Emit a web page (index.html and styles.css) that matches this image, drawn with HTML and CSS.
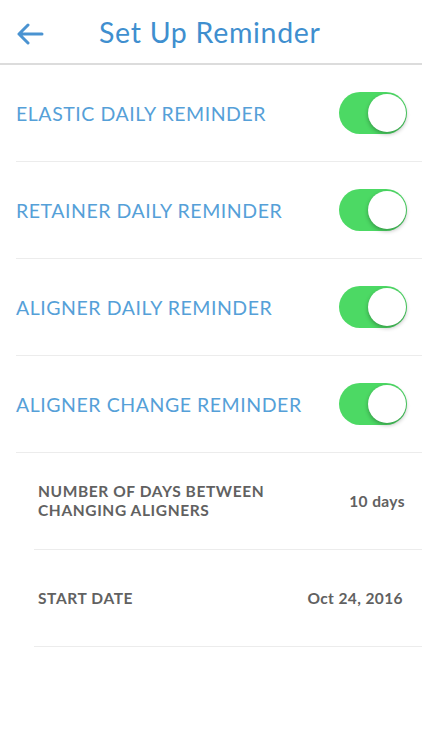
FILE: index.html
```html
<!DOCTYPE html>
<html lang="en">
<head>
  <meta charset="utf-8">
  <title>Set Up Reminder</title>
  <link rel="stylesheet" href="styles.css">
</head>
<body>
  <div class="header">
    <svg class="back" width="28" height="22" viewBox="0 0 28 22">
      <path d="M26 11H3M12 2L3 11l9 9" fill="none" stroke="#4a93d1" stroke-width="3" stroke-linecap="round" stroke-linejoin="round"/>
    </svg>
    <h1 class="title">Set Up Reminder</h1>
  </div>

  <div class="row">
    <span class="label">ELASTIC DAILY REMINDER</span>
    <span class="switch"><span class="knob"></span></span>
  </div>
  <div class="row">
    <span class="label">RETAINER DAILY REMINDER</span>
    <span class="switch"><span class="knob"></span></span>
  </div>
  <div class="row">
    <span class="label">ALIGNER DAILY REMINDER</span>
    <span class="switch"><span class="knob"></span></span>
  </div>
  <div class="row">
    <span class="label">ALIGNER CHANGE REMINDER</span>
    <span class="switch"><span class="knob"></span></span>
  </div>

  <div class="sub">
    <span class="sub-label">NUMBER OF DAYS BETWEEN<br>CHANGING ALIGNERS</span>
    <span class="value">10 days</span>
  </div>
  <div class="sub">
    <span class="sub-label">START DATE</span>
    <span class="value date">Oct 24, 2016</span>
  </div>
</body>
</html>
```

FILE: styles.css
```css
body {
  margin: 0;
  background: #fff;
  font-family: Lato, "Open Sans", sans-serif;
}
.header {
  height: 63px;
  display: flex;
  align-items: center;
  border-bottom: 2px solid #dcdcdc;
}
.back {
  margin-left: 16px;
  margin-top: 4px;
}
.title {
  margin: 0 0 0 55px;
  font-size: 28.5px;
  font-weight: 400;
  color: #3f8fcf;
  letter-spacing: 0.7px;
}
.row {
  height: 96px;
  margin-left: 16px;
  display: flex;
  align-items: center;
  justify-content: space-between;
  border-bottom: 1px solid #ececec;
}
.label {
  font-size: 19.5px;
  color: #55a0d8;
  letter-spacing: 0.55px;
}
.switch {
  width: 68px;
  height: 42px;
  border-radius: 21px;
  background: #4cd964;
  margin-right: 15px;
  display: flex;
  justify-content: flex-end;
  align-items: center;
}
.knob {
  width: 38px;
  height: 38px;
  border-radius: 50%;
  background: #fff;
  margin-right: 1px;
  box-shadow: 0 2px 4px rgba(0, 0, 0, 0.3);
}
.sub {
  height: 96px;
  margin-left: 34px;
  padding-left: 4px;
  display: flex;
  align-items: center;
  justify-content: space-between;
  border-bottom: 1px solid #ececec;
}
.sub-label {
  font-size: 15.5px;
  font-weight: 700;
  color: #616161;
  line-height: 19px;
  letter-spacing: 0.6px;
}
.value {
  font-size: 15.5px;
  font-weight: 700;
  color: #616161;
  letter-spacing: 0.4px;
  margin-right: 17px;
}
.date {
  margin-right: 19px;
}
```
